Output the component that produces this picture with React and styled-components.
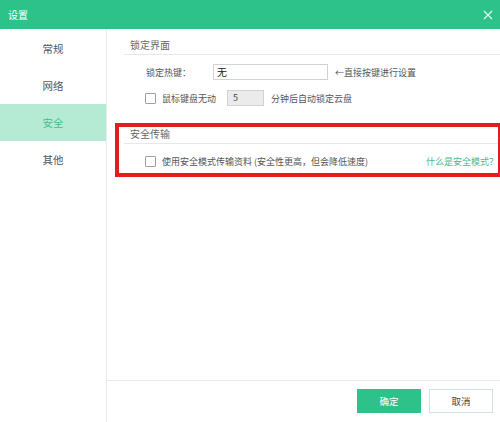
import React from 'react'
import styled, { createGlobalStyle } from 'styled-components'

const GlobalStyle = createGlobalStyle`
  html, body {
    margin: 0;
    padding: 0;
    background: #fff;
    overflow: hidden;
  }
  * { box-sizing: border-box; }
`

const FONT = `"Noto Sans CJK SC", "Noto Sans", sans-serif`
const GREEN = '#2ec28b'

const navItems = ['常规', '网络', '安全', '其他']

function App() {
  return (
    <Window>
      <GlobalStyle />
      <TitleBar>
        <Title>设置</Title>
        <CloseButton aria-label="关闭">
          <svg width="10" height="10" viewBox="0 0 10 10">
            <path d="M1 1 L9 9 M9 1 L1 9" stroke="#e6fff4" strokeWidth="1.1" fill="none" />
          </svg>
        </CloseButton>
      </TitleBar>
      <Body>
        <Sidebar>
          {navItems.map((item) => (
            <NavItem key={item} $active={item === '安全'}>{item}</NavItem>
          ))}
        </Sidebar>
        <Main>
          <Content>
            <Section>
              <SectionHeader>锁定界面</SectionHeader>
              <Row>
                <Label>锁定热键：</Label>
                <TextInput>无</TextInput>
                <Text>←直接按键进行设置</Text>
              </Row>
              <Row>
                <Checkbox />
                <Text>鼠标键盘无动</Text>
                <NumberInput>5</NumberInput>
                <Text>分钟后自动锁定云盘</Text>
              </Row>
            </Section>
            <HighlightSection>
              <SectionHeader>安全传输</SectionHeader>
              <Row>
                <Checkbox />
                <Text>使用安全模式传输资料 (安全性更高，但会降低速度)</Text>
                <HelpLink>什么是安全模式？</HelpLink>
              </Row>
            </HighlightSection>
          </Content>
          <Footer>
            <Button $primary>确定</Button>
            <Button>取消</Button>
          </Footer>
        </Main>
      </Body>
    </Window>
  )
}

export default App

const Window = styled.div`
  width: 500px;
  height: 422px;
  display: flex;
  flex-direction: column;
  background: #fff;
  font-family: ${FONT};
  color: #555;
`

const TitleBar = styled.div`
  height: 29px;
  flex-shrink: 0;
  background: ${GREEN};
  display: flex;
  align-items: center;
  justify-content: space-between;
  padding: 0 6px 0 8px;
`

const Title = styled.span`
  color: #fff;
  font-size: 10px;
  line-height: 14px;
`

const CloseButton = styled.span`
  width: 12px;
  height: 12px;
  display: flex;
  align-items: center;
  justify-content: center;
`

const Body = styled.div`
  flex: 1;
  display: flex;
  min-height: 0;
`

const Sidebar = styled.div`
  width: 107px;
  flex-shrink: 0;
  border-right: 1px solid #ececec;
  padding-top: 1px;
  display: flex;
  flex-direction: column;
`

const NavItem = styled.div`
  height: 37px;
  display: flex;
  align-items: center;
  justify-content: center;
  font-size: 10.5px;
  color: ${(p) => (p.$active ? '#45bd90' : '#555')};
  background: ${(p) => (p.$active ? '#b5ebd5' : 'transparent')};
`

const Main = styled.div`
  flex: 1;
  display: flex;
  flex-direction: column;
`

const Content = styled.div`
  flex: 1;
`

const Section = styled.div`
  margin-left: 17px;
`

const HighlightSection = styled(Section)`
  position: relative;
  margin-top: 12px;

  &::after {
    content: '';
    position: absolute;
    left: -9px;
    top: 5px;
    right: -2px;
    bottom: -8px;
    border: 4px solid #e31c24;
    pointer-events: none;
  }
`

const SectionHeader = styled.div`
  padding: 9px 0 2px 6px;
  line-height: 14px;
  font-size: 10px;
  color: #666;
  border-bottom: 1px solid #e8e8e8;
`

const Row = styled.div`
  height: 16px;
  margin-top: 9px;
  padding: 0 2px 0 21px;
  display: flex;
  align-items: center;

  & + & {
    margin-top: 10px;
  }
`

const Label = styled.span`
  width: 68px;
  padding-left: 1px;
  font-size: 9px;
  color: #555;
`

const Text = styled.span`
  font-size: 9px;
  color: #555;
  white-space: nowrap;
`

const TextInput = styled.div`
  width: 115px;
  height: 16px;
  border: 1px solid #d2d2d2;
  background: #fff;
  font-size: 10px;
  line-height: 14px;
  padding-left: 3px;
  color: #222;
  margin-right: 7px;
`

const NumberInput = styled(TextInput)`
  width: 37px;
  background: #ebebeb;
  padding-left: 5px;
  font-size: 9px;
  color: #444;
  margin: 0 7px 0 11px;
`

const Checkbox = styled.span`
  width: 11px;
  height: 11px;
  border: 1px solid #a0a0a0;
  border-radius: 1px;
  background: #fff;
  margin-right: 6px;
  flex-shrink: 0;
`

const HelpLink = styled.span`
  margin-left: auto;
  font-size: 9px;
  color: #45bb93;
  white-space: nowrap;
`

const Footer = styled.div`
  height: 42px;
  flex-shrink: 0;
  border-top: 1px solid #ebebeb;
  display: flex;
  justify-content: flex-end;
  align-items: flex-start;
  gap: 8px;
  padding: 8px 7px 0 0;
`

const Button = styled.div`
  width: 64px;
  height: 24px;
  display: flex;
  align-items: center;
  justify-content: center;
  font-size: 9.5px;
  color: ${(p) => (p.$primary ? '#fff' : '#444')};
  background: ${(p) => (p.$primary ? GREEN : '#fff')};
  border: 1px solid ${(p) => (p.$primary ? GREEN : '#cfe4dc')};
`
